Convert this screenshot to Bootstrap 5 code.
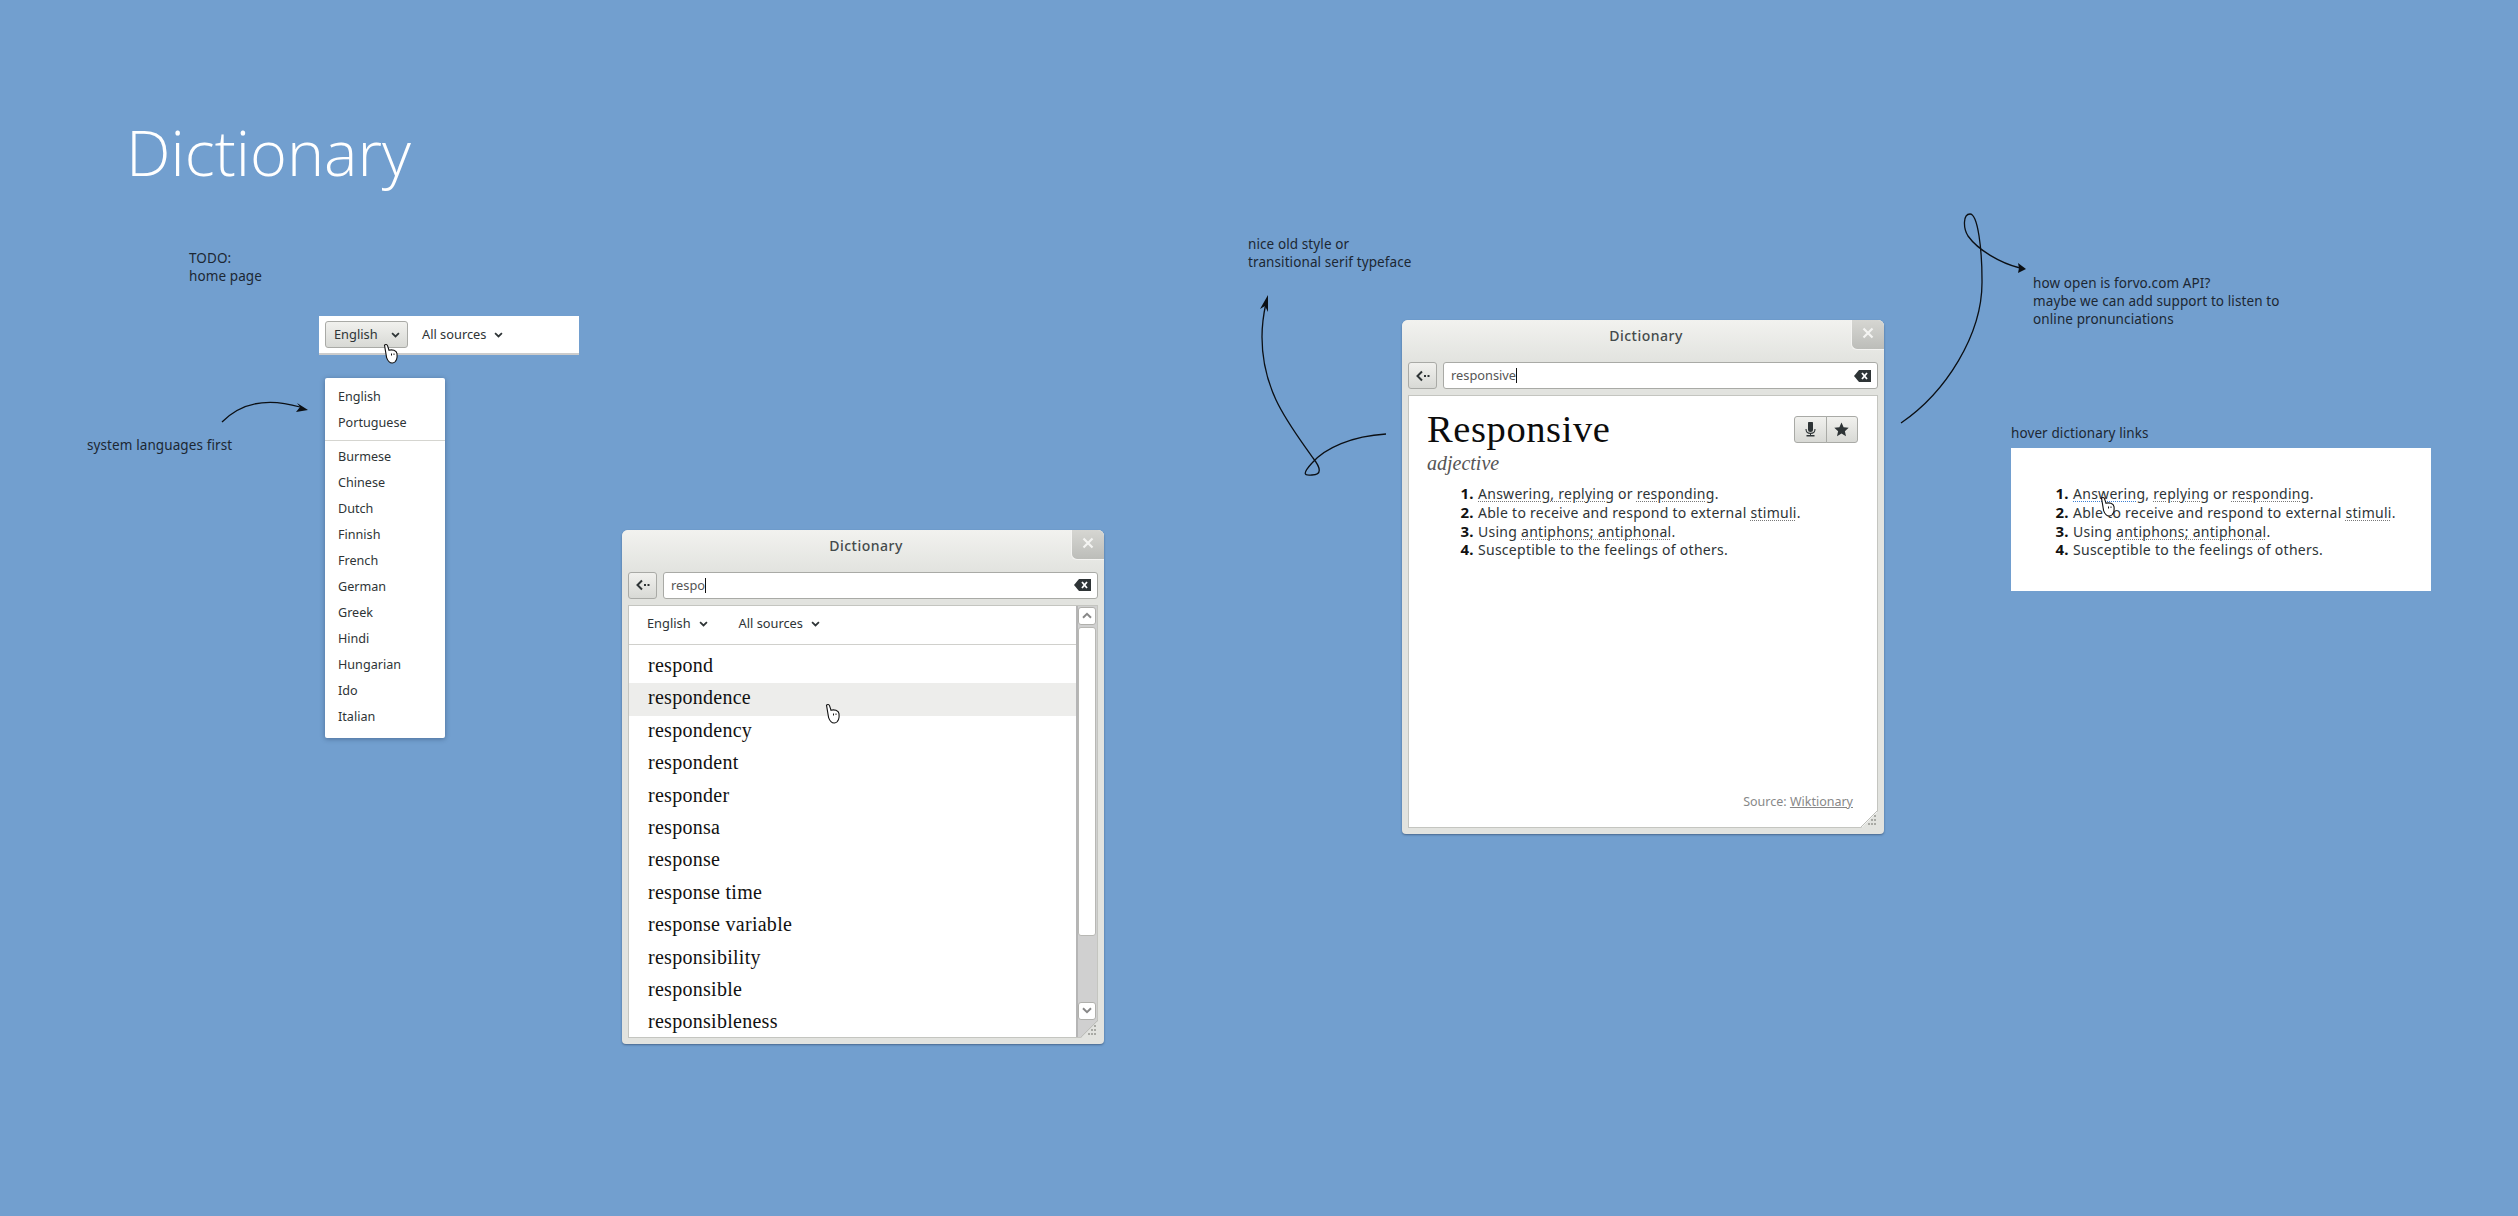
<!DOCTYPE html>
<html lang="en">
<head>
    <meta charset="UTF-8">
    <meta name="viewport" content="width=device-width, initial-scale=1.0">
    <title>Dictionary</title>
    <link href="https://cdn.jsdelivr.net/npm/bootstrap@5.3.0/dist/css/bootstrap.min.css" rel="stylesheet">

    <style>
        body {
            background-color: #729fcf;
            font-family: "Noto Sans", sans-serif;
            font-size: 13.5px;
            color: #2e3436;
            height: 1216px;
            overflow: hidden;
        }

        /* free canvas: each thing sits where the designer dropped it */
        .canvas { position: relative; width: 2518px; height: 1216px; }
        .drop { position: absolute; }
        .note { line-height: 18px; color: #1c2733; white-space: nowrap; letter-spacing: .1px; }
        .sketch { position: absolute; inset: 0; pointer-events: none; }
        .sketch path.line { fill: none; stroke: #0b0f14; stroke-width: 1.3; }
        .sketch path.head { fill: #0b0f14; }

        .page-title {
            left: 126px; top: 109px;
            font-family: "Open Sans", sans-serif;
            font-weight: 350;
            font-size: 63px;
            line-height: 86px;
            color: #fff;
            margin: 0;
        }

        .home-bar { left: 319px; top: 316px; width: 260px; height: 39px; background: #fff; border-bottom: 2px solid #ccc; padding: 0 6px; }
        .pick { display: inline-flex; align-items: center; gap: 8px; color: #2e3436; white-space: nowrap; font-size: 12.8px; }
        .pick svg { width: 9px; height: 6px; }
        .pick-next { margin-left: 14px; }
        .pick-btn {
            height: 27px; width: 83px; padding: 0 0 0 8px; gap: 13px;
            font-size: 12.8px; color: #2e3436;
            background: linear-gradient(#f1f1ee, #d8d9d5);
            border: 1px solid #a9aaa6; border-radius: 3px;
        }

        .lang-menu {
            left: 325px; top: 378px; width: 120px; height: 360px;
            background: #fff; border-radius: 2px; padding: 6px 0;
            font-size: 12.6px;
            box-shadow: 0 1px 5px rgba(20, 40, 70, .4);
        }
        .lang-menu li { height: 26px; line-height: 26px; padding-left: 13px; }
        .lang-menu .menu-rule { height: 1px; padding: 0; margin: 4px 0 3px; background: #d5d5d0; }

        /* gtk style window */
        .app-window {
            width: 482px; height: 514px;
            background: #e2e3df;
            border-radius: 6px 6px 4px 4px;
            padding: 0 6px 6px;
            box-shadow: 0 1px 2px rgba(30, 50, 80, .5);
        }
        .title-row {
            height: 42px; margin: 0 -6px; padding: 5px 0 0 6px;
            text-align: center; font-weight: 500; font-size: 14px; letter-spacing: .5px; color: #444a4c;
            background: linear-gradient(#f2f2ef, #e2e3df);
            border-radius: 6px 6px 0 0;
        }
        .close-tab {
            position: absolute; top: 0; right: 0; width: 33px; height: 30px;
            background: linear-gradient(#d6d6d2, #bcbdb9);
            border-radius: 0 6px 0 6px;
            border-left: 1px solid #f4f4f2; border-bottom: 1px solid #f4f4f2;
            display: flex; align-items: center; justify-content: center;
        }
        .close-tab svg { width: 12px; height: 12px; margin-top: -4px; }
        .tool-row { height: 27px; margin-bottom: 6px; }
        .back-btn {
            width: 29px; padding: 0; margin-right: 6px; flex: none;
            background: linear-gradient(#f1f1ee, #d8d9d5);
            border: 1px solid #a9aaa6; border-radius: 3px;
            display: flex; align-items: center; justify-content: center;
        }
        .back-btn svg { width: 14px; height: 12px; }
        .entry {
            background: #fff; border: 1px solid #a9aaa6; border-radius: 3px;
            padding: 0 6px 0 7px; color: #555; font-size: 12.8px;
        }
        .caret-bar { display: inline-block; width: 1px; height: 15px; background: #111; vertical-align: -3px; }
        .clear-icon { width: 17px; height: 12px; }
        .pane { background: #fff; border: 1px solid #c4c5c0; min-height: 0; overflow: hidden; }

        .filter-row { height: 39px; border-bottom: 1px solid #d0d0cc; padding: 0 0 2px 18px; gap: 31px; }
        .word-col { overflow: hidden; min-width: 0; }
        .word-list { padding-top: 6.4px; }
        .word-list li {
            height: 32.4px; line-height: 29px; padding-left: 19px;
            font-family: "Liberation Serif", serif; font-size: 20px; letter-spacing: .28px; color: #111;
        }
        .word-list li.is-hover { background: #ededeb; }

        .scroll-rail { width: 21px; flex: none; background: #d0d0d0; border-left: 2px solid #b5b5b5; padding: 1px 1px 0 0; gap: 2px; }
        .rail-btn {
            width: 18px; height: 18px; background: #fff; border: 1px solid #b0b0ac; border-radius: 3px;
            display: flex; align-items: center; justify-content: center; flex: none;
        }
        .rail-btn.rail-end { margin-top: auto; margin-bottom: 17px; }
        .rail-btn svg { width: 10px; height: 7px; }
        .rail-thumb { height: 309px; background: #fff; border: 1px solid #b8b8b4; border-radius: 3px; flex: none; }

        .grip { position: absolute; right: 5px; bottom: 6px; width: 19px; height: 19px; }

        .entry-pane { padding: 12px 19px 0 18px; position: relative; }
        .word-title {
            font-family: "Liberation Serif", serif; font-size: 38.5px; line-height: 42px; font-weight: 400; letter-spacing: .6px; color: #0c0c0c; margin: 0;
        }
        .word-class {
            font-family: "Liberation Serif", serif; font-style: italic; font-size: 20px; line-height: 24px; color: #555; margin-top: 1px;
        }
        .mic-star { height: 27px; margin-top: 8px; }
        .mic-star .btn {
            width: 32.5px; padding: 0; height: 27px;
            background: linear-gradient(#f1f1ee, #d8d9d5);
            border: 1px solid #a9aaa6; border-radius: 3px;
            display: flex; align-items: center; justify-content: center;
        }
        .mic-star svg { width: 15px; height: 15px; }
        .sense-list { list-style: decimal; margin: 0; color: #2e3436; line-height: 18.8px; font-size: 14px; letter-spacing: .27px; }
        .sense-list li { height: 18.8px; }
        .sense-list li::marker { font-weight: 700; font-size: 15px; color: #111; }
        .entry-pane .sense-list { padding-left: 51px; margin-top: 9px; }
        .sense-link { text-decoration: underline dotted #777 1px; text-underline-offset: 2px; }
        .sense-link.is-hover { text-decoration-color: #3f7fd0; }
        .source-line { position: absolute; right: 24px; bottom: 15px; color: #888; font-size: 12.5px; }
        .source-line a { color: #888; }

        .hover-card { left: 2011px; top: 448px; width: 420px; height: 143px; background: #fff; padding: 36px 0 0 62px; }
        .hover-card .sense-list { padding: 0; }

        .hand { position: absolute; width: 17px; height: 21px; pointer-events: none; }
    </style>
</head>
<body>

    <svg width="0" height="0" class="position-absolute">
        <symbol id="i-down" viewBox="0 0 10 7"><path d="M1 1.2 5 5.2 9 1.2" fill="none" stroke="#2e3436" stroke-width="2"/></symbol>
        <symbol id="i-hand" viewBox="0 0 17 21">
            <path d="M2.5 2.2C3.6 1 5 1.4 5.5 2.6L7 7.2C10 6.2 14.6 7.4 15 10.6 15.4 14 15 19.6 10.4 20 6.8 20.2 5.6 17.4 4.6 14.6Z" fill="#fff" stroke="#111" stroke-width="1.1"/>
            <path d="M9.5 10.5v2M12 10.5v1.4" stroke="#111" stroke-width="1"/>
        </symbol>
        <symbol id="i-back" viewBox="0 0 14 12">
            <path d="M6 1.5 1.5 6 6 10.5" fill="none" stroke="#2e3436" stroke-width="2"/>
            <path d="M8 5h2v2H8zM11.5 5h2v2h-2z" fill="#2e3436"/>
        </symbol>
        <symbol id="i-clear" viewBox="0 0 17 12">
            <path d="M5 0H17V12H5L0 6Z" fill="#2e3436"/>
            <path d="M8 3 13 9M13 3 8 9" stroke="#fff" stroke-width="1.8"/>
        </symbol>
        <symbol id="i-grip" viewBox="0 0 19 19">
            <path d="M19 1V19H1Z" fill="#e2e3df"/>
            <path d="M18 1 1 18" stroke="#bdbeb9"/>
            <path d="M14 6h2v2h-2zM11 10h2v2h-2zM14 10h2v2h-2zM8 14h2v2H8zM11 14h2v2h-2zM14 14h2v2h-2z" fill="#a8a9a4"/>
        </symbol>
    </svg>

    <div class="canvas">

        <svg class="sketch" width="2518" height="1216" viewBox="0 0 2518 1216">
            <path class="line" d="M222 422C240 404 266 397 300 407"/>
            <path class="head" d="M308 410 297 403 300 407 296 412Z"/>
            <path class="line" d="M1386 434C1352 436 1325 448 1312 463 1302 474 1304 476 1312 475 1322 475 1321 468 1313 458 1290 425 1262 392 1262 337 1262 325 1264 312 1266 303"/>
            <path class="head" d="M1268 295 1260 309 1265 306 1268 312Z"/>
            <path class="line" d="M1901 423C1945 393 1983 335 1982 280 1982 250 1978 214 1970 214 1963 214 1963 228 1968 236 1978 250 2000 263 2020 268"/>
            <path class="head" d="M2026 269 2018 263 2019 268 2018 273Z"/>
        </svg>

        <h1 class="drop page-title">Dictionary</h1>

        <div class="drop note" style="left:189px;top:249px">TODO:<br>home page</div>
        <div class="drop note" style="left:87px;top:436px">system languages first</div>
        <div class="drop note" style="left:1248px;top:235px">nice old style or<br>transitional serif typeface</div>
        <div class="drop note" style="left:2033px;top:274px">how open is forvo.com API?<br>maybe we can add support to listen to<br>online pronunciations</div>
        <div class="drop note" style="left:2011px;top:424px">hover dictionary links</div>

        <!-- language picker, home page -->
        <div class="drop home-bar d-flex align-items-center">
            <button type="button" class="btn pick pick-btn">English <svg><use href="#i-down"/></svg></button>
            <span class="pick pick-next">All sources <svg><use href="#i-down"/></svg></span>
        </div>
        <ul class="drop lang-menu list-unstyled mb-0">
            <li>English</li>
            <li>Portuguese</li>
            <li class="menu-rule"></li>
            <li>Burmese</li>
            <li>Chinese</li>
            <li>Dutch</li>
            <li>Finnish</li>
            <li>French</li>
            <li>German</li>
            <li>Greek</li>
            <li>Hindi</li>
            <li>Hungarian</li>
            <li>Ido</li>
            <li>Italian</li>
        </ul>

        <!-- search window -->
        <div class="drop app-window d-flex flex-column" style="left:622px;top:530px">
            <div class="title-row">Dictionary</div>
            <div class="close-tab"><svg viewBox="0 0 12 12"><path d="M1.5 1.5 10.5 10.5M10.5 1.5 1.5 10.5" stroke="#f4f4f2" stroke-width="2.2"/></svg></div>
            <div class="tool-row d-flex">
                <button type="button" class="btn back-btn"><svg><use href="#i-back"/></svg></button>
                <div class="entry flex-grow-1 d-flex align-items-center justify-content-between">
                    <span>respo<span class="caret-bar"></span></span>
                    <svg class="clear-icon"><use href="#i-clear"/></svg>
                </div>
            </div>
            <div class="pane flex-grow-1 d-flex">
                <div class="word-col flex-grow-1">
                    <div class="filter-row d-flex align-items-center">
                        <span class="pick">English <svg><use href="#i-down"/></svg></span>
                        <span class="pick">All sources <svg><use href="#i-down"/></svg></span>
                    </div>
                    <ul class="word-list list-unstyled mb-0">
                        <li>respond</li>
                        <li class="is-hover">respondence</li>
                        <li>respondency</li>
                        <li>respondent</li>
                        <li>responder</li>
                        <li>responsa</li>
                        <li>response</li>
                        <li>response time</li>
                        <li>response variable</li>
                        <li>responsibility</li>
                        <li>responsible</li>
                        <li>responsibleness</li>
                    </ul>
                </div>
                <div class="scroll-rail d-flex flex-column">
                    <div class="rail-btn"><svg viewBox="0 0 10 7"><path d="M1 5.8 5 1.8 9 5.8" fill="none" stroke="#888" stroke-width="2"/></svg></div>
                    <div class="rail-thumb"></div>
                    <div class="rail-btn rail-end"><svg viewBox="0 0 10 7"><path d="M1 1.2 5 5.2 9 1.2" fill="none" stroke="#888" stroke-width="2"/></svg></div>
                </div>
            </div>
            <svg class="grip"><use href="#i-grip"/></svg>
        </div>

        <!-- definition window -->
        <div class="drop app-window d-flex flex-column" style="left:1402px;top:320px">
            <div class="title-row">Dictionary</div>
            <div class="close-tab"><svg viewBox="0 0 12 12"><path d="M1.5 1.5 10.5 10.5M10.5 1.5 1.5 10.5" stroke="#f4f4f2" stroke-width="2.2"/></svg></div>
            <div class="tool-row d-flex">
                <button type="button" class="btn back-btn"><svg><use href="#i-back"/></svg></button>
                <div class="entry flex-grow-1 d-flex align-items-center justify-content-between">
                    <span>responsive<span class="caret-bar"></span></span>
                    <svg class="clear-icon"><use href="#i-clear"/></svg>
                </div>
            </div>
            <div class="pane entry-pane flex-grow-1">
                <div class="d-flex justify-content-between align-items-start">
                    <h2 class="word-title">Responsive</h2>
                    <div class="btn-group mic-star">
                        <button type="button" class="btn"><svg viewBox="0 0 15 15"><path d="M5 1.5a2.5 2.5 0 0 1 5 0v6a2.5 2.5 0 0 1-5 0Z" fill="#2e3436"/><path d="M3 7c0 3 2 4.4 4.5 4.4S12 10 12 7" fill="none" stroke="#2e3436" stroke-width="1.1"/><path d="M7 11h1v2H7zM3.5 13h8v1.6h-8z" fill="#2e3436"/></svg></button>
                        <button type="button" class="btn"><svg viewBox="0 0 15 15"><path d="M7.5.6 9.6 5.3 14.7 5.8 10.9 9.2 12 14.2 7.5 11.6 3 14.2 4.1 9.2.3 5.8 5.4 5.3Z" fill="#2e3436"/></svg></button>
                    </div>
                </div>
                <div class="word-class">adjective</div>
                <ol class="sense-list">
                    <li><span class="sense-link">Answering, replying</span> or <span class="sense-link">responding</span>.</li>
                    <li>Able to receive and respond to external <span class="sense-link">stimuli</span>.</li>
                    <li>Using <span class="sense-link">antiphons; antiphonal</span>.</li>
                    <li>Susceptible to the feelings of others.</li>
                </ol>
                <div class="source-line">Source: <a href="#">Wiktionary</a></div>
            </div>
            <svg class="grip"><use href="#i-grip"/></svg>
        </div>

        <!-- hover state of the links -->
        <div class="drop hover-card">
            <ol class="sense-list">
                <li><span class="sense-link is-hover">Answering</span>, <span class="sense-link">replying</span> or <span class="sense-link">responding</span>.</li>
                <li>Able to receive and respond to external <span class="sense-link">stimuli</span>.</li>
                <li>Using <span class="sense-link">antiphons; antiphonal</span>.</li>
                <li>Susceptible to the feelings of others.</li>
            </ol>
        </div>

        <svg class="hand" style="left:382px;top:343px"><use href="#i-hand"/></svg>
        <svg class="hand" style="left:824px;top:703px"><use href="#i-hand"/></svg>
        <svg class="hand" style="left:2099px;top:496px"><use href="#i-hand"/></svg>
    </div>

    <script src="https://cdn.jsdelivr.net/npm/bootstrap@5.3.0/dist/js/bootstrap.bundle.min.js"></script>
</body>
</html>
